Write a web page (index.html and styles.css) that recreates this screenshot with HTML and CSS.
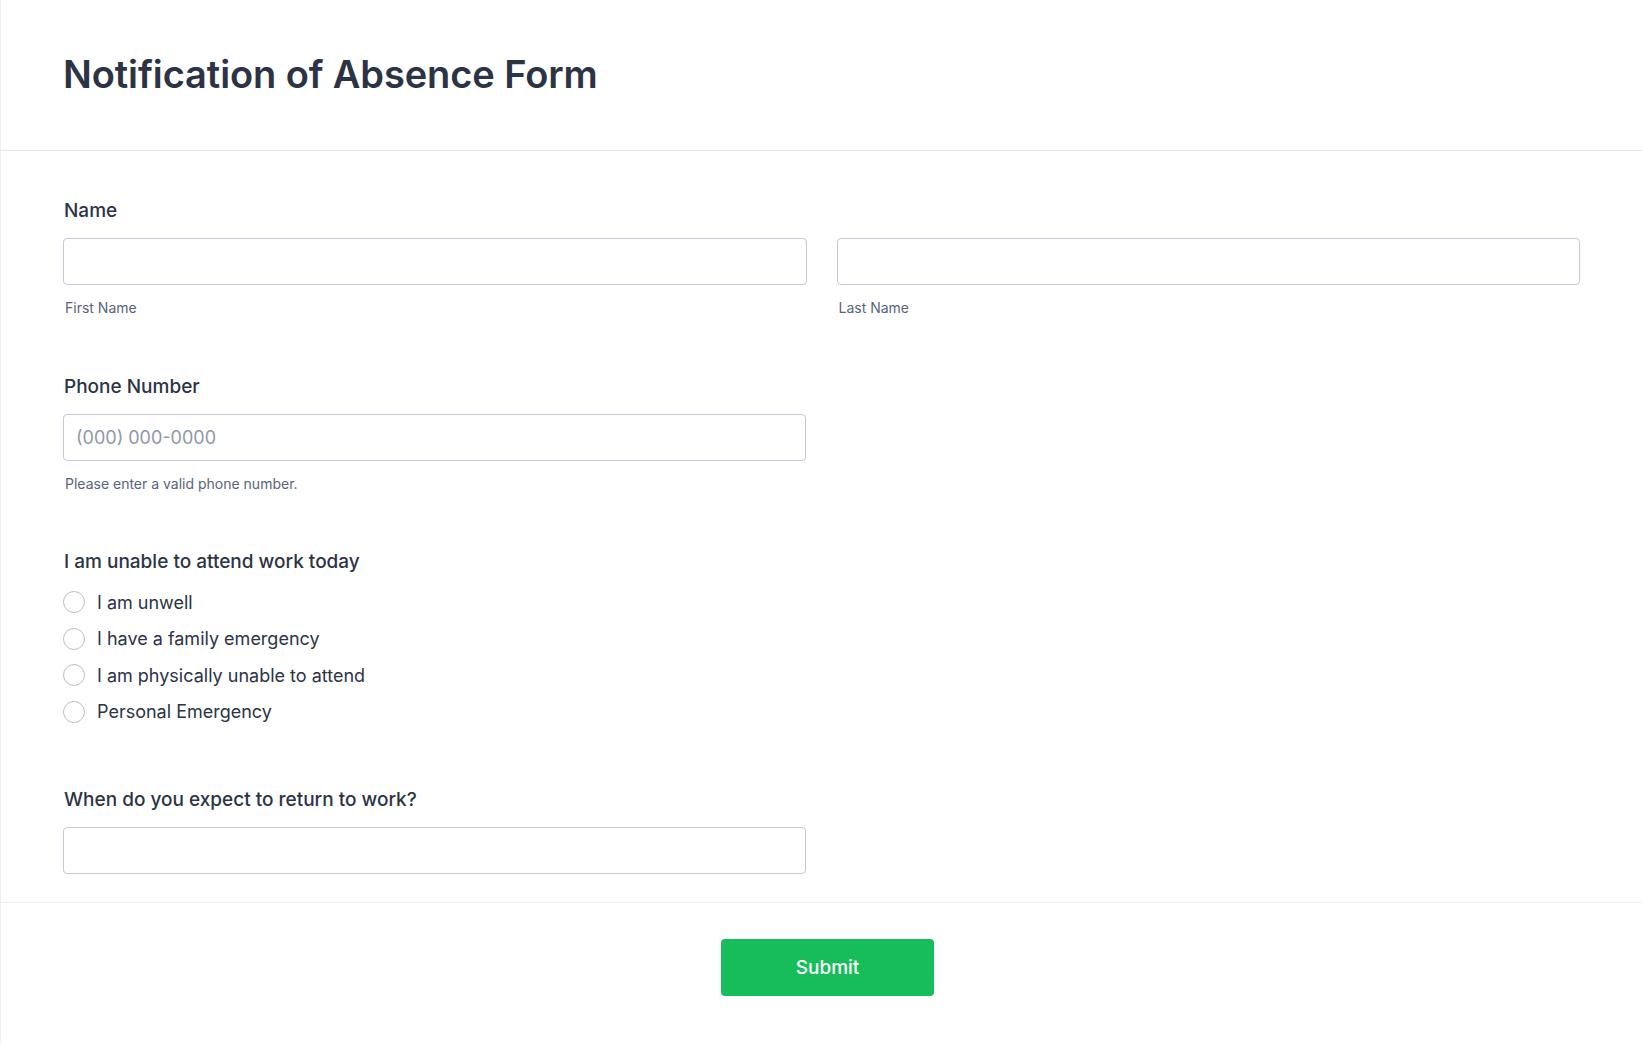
FILE: index.html
```html
<!DOCTYPE html>
<html lang="en">
<head>
    <meta charset="UTF-8">
    <meta name="viewport" content="width=device-width, initial-scale=1.0">
    <title>Notification of Absence Form</title>
    <link rel="stylesheet" href="styles.css">
</head>
<body>

    <form class="form-card">
        <div class="form-header">
            <h1>Notification of Absence Form</h1>
        </div>

        <div class="form-body">
            <div class="field">
                <label class="field-label">Name</label>
                <div class="name-row">
                    <div class="name-part">
                        <input type="text" class="text-input">
                        <span class="sublabel">First Name</span>
                    </div>
                    <div class="name-part">
                        <input type="text" class="text-input">
                        <span class="sublabel">Last Name</span>
                    </div>
                </div>
            </div>

            <div class="field field-phone">
                <label class="field-label">Phone Number</label>
                <input type="text" class="text-input half" placeholder="(000) 000-0000">
                <span class="sublabel">Please enter a valid phone number.</span>
            </div>

            <div class="field field-radio">
                <label class="field-label">I am unable to attend work today</label>
                <div class="radio-list">
                    <label class="radio-option"><span class="radio-circle"></span>I am unwell</label>
                    <label class="radio-option"><span class="radio-circle"></span>I have a family emergency</label>
                    <label class="radio-option"><span class="radio-circle"></span>I am physically unable to attend</label>
                    <label class="radio-option"><span class="radio-circle"></span>Personal Emergency</label>
                </div>
            </div>

            <div class="field field-return">
                <label class="field-label">When do you expect to return to work?</label>
                <input type="text" class="text-input half">
            </div>
        </div>

        <div class="form-footer">
            <button type="button" class="submit-button">Submit</button>
        </div>
    </form>

</body>
</html>
```

FILE: styles.css
```css
body {
    margin: 0;
    background-color: #ffffff;
    font-family: 'Inter', 'Noto Sans', sans-serif;
    color: #2c3345;
}
.form-card {
    border-left: 1px solid #eceef2;
    border-bottom-left-radius: 4px;
    min-height: 1044px;
    box-sizing: border-box;
}
.form-header {
    height: 151px;
    box-sizing: border-box;
    padding: 51px 62px 0;
    border-bottom: 1px solid #e3e5ea;
}
.form-header h1 {
    margin: 0;
    font-size: 38px;
    line-height: 46px;
    font-weight: 600;
    color: #2c3345;
    letter-spacing: -0.1px;
}
.form-body {
    padding: 49px 62px 28px;
}
.field-label {
    display: block;
    font-size: 19px;
    line-height: 22px;
    font-weight: 500;
    color: #2c3345;
    margin-left: 1px;
}
.name-row {
    display: flex;
    gap: 30px;
    margin-top: 16px;
}
.name-part {
    flex: 1;
}
.text-input {
    display: block;
    width: 100%;
    height: 47px;
    box-sizing: border-box;
    border: 1px solid #c3c7d6;
    border-radius: 4px;
    padding: 0 12px;
    font-family: 'Inter', 'Noto Sans', sans-serif;
    font-size: 18px;
    color: #2c3345;
    background-color: #ffffff;
}
.text-input::placeholder {
    color: #8f97a8;
}
.text-input.half {
    width: calc(50% - 16px);
    margin-top: 16px;
}
.sublabel {
    display: block;
    margin-top: 14px;
    margin-left: 2px;
    font-size: 14px;
    line-height: 18px;
    color: #57647e;
}
.field-phone {
    margin-top: 59px;
}
.field-radio {
    margin-top: 58px;
}
.radio-list {
    display: flex;
    flex-direction: column;
    gap: 14.6px;
    margin-top: 18px;
}
.radio-option {
    display: flex;
    align-items: center;
    height: 22px;
    font-size: 18px;
    color: #2c3345;
}
.radio-circle {
    width: 22px;
    height: 22px;
    box-sizing: border-box;
    border: 1px solid #b8bdc9;
    border-radius: 50%;
    margin-right: 12px;
    flex-shrink: 0;
}
.field-return {
    margin-top: 66px;
}
.form-footer {
    border-top: 1px solid #eceef3;
    padding: 36px 0 0 12px;
    display: flex;
    justify-content: center;
}
.submit-button {
    width: 213px;
    height: 57px;
    border: none;
    border-radius: 4px;
    background-color: #18bd5b;
    color: #ffffff;
    font-family: 'Inter', 'Noto Sans', sans-serif;
    font-size: 19px;
    font-weight: 500;
    cursor: pointer;
}
```
